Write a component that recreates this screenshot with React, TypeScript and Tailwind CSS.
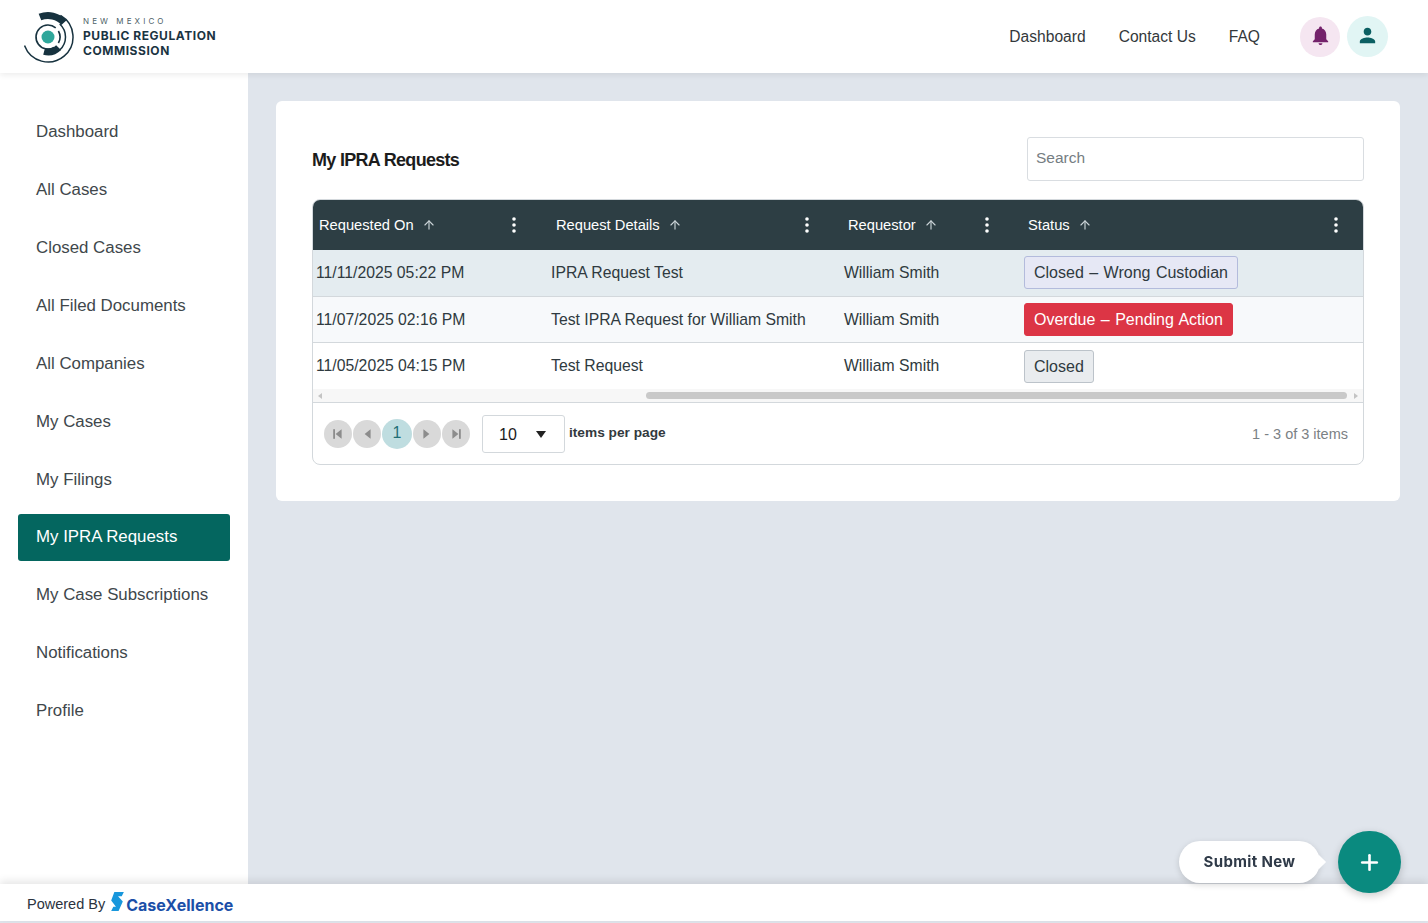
import { ArrowUp, Plus } from "lucide-react";

const navItems = [
  "Dashboard",
  "All Cases",
  "Closed Cases",
  "All Filed Documents",
  "All Companies",
  "My Cases",
  "My Filings",
  "My IPRA Requests",
  "My Case Subscriptions",
  "Notifications",
  "Profile",
];

const rows = [
  {
    date: "11/11/2025 05:22 PM",
    details: "IPRA Request Test",
    status: "Closed – Wrong Custodian",
    badge: "bg-[#e6e8f5] border-[#b3bbdc] text-[#2f3a40] mb-[1px]",
    row: "bg-[#e4ecf0] h-[47px] border-b border-[#d3d8dc]",
  },
  {
    date: "11/07/2025 02:16 PM",
    details: "Test IPRA Request for William Smith",
    status: "Overdue – Pending Action",
    badge: "bg-[#dc3545] border-[#dc3545] text-white",
    row: "bg-[#f7f9fb] h-[46px] border-b border-[#d3d8dc]",
  },
  {
    date: "11/05/2025 04:15 PM",
    details: "Test Request",
    status: "Closed",
    badge: "bg-[#e9ecef] border-[#bcc3ca] text-[#2f3a40] mt-[1px]",
    row: "bg-white h-[46px]",
  },
];

function arc(r: number, from: number, to: number) {
  const rad = (d: number) => (d * Math.PI) / 180;
  const x1 = 24 + r * Math.cos(rad(from));
  const y1 = 27 + r * Math.sin(rad(from));
  const x2 = 24 + r * Math.cos(rad(to));
  const y2 = 27 + r * Math.sin(rad(to));
  const large = to - from > 180 ? 1 : 0;
  return `M${x1} ${y1}A${r} ${r} 0 ${large} 1 ${x2} ${y2}`;
}

function Logo() {
  return (
    <svg width="52" height="54" viewBox="0 0 52 54" fill="none" stroke="#17323f">
      <circle cx="24" cy="27" r="6.5" fill="#2fa79b" stroke="none" />
      <path d={arc(12, 60, 310)} strokeWidth="1.6" />
      <path d={arc(12, -30, 30)} strokeWidth="1.6" />
      <path d={arc(17.5, -48, 48)} strokeWidth="1.5" />
      <path d={arc(25, -60, 160)} strokeWidth="1.5" />
      <path d={arc(21.5, -112, -42)} strokeWidth="7" />
      <path d={arc(15, 45, 105)} strokeWidth="7" />
    </svg>
  );
}

function Dots() {
  return (
    <svg width="4" height="16" viewBox="0 0 4 16" fill="#ffffff">
      <circle cx="2" cy="2" r="1.8" />
      <circle cx="2" cy="8" r="1.8" />
      <circle cx="2" cy="14" r="1.8" />
    </svg>
  );
}

function HeaderCell({ label, pad }: { label: string; pad: string }) {
  return (
    <div className={`flex items-center justify-between ${pad}`}>
      <div className="flex items-center gap-[8px]">
        <span>{label}</span>
        <ArrowUp className="w-[14px] h-[14px] text-[#c9d2d6]" strokeWidth={2} />
      </div>
      <Dots />
    </div>
  );
}

function PagerButton({ children }: { children: React.ReactNode }) {
  return (
    <div className="w-[28px] h-[28px] rounded-full bg-[#d9d9d9] flex items-center justify-center">
      {children}
    </div>
  );
}

function Triangle({ dir, bar }: { dir: "left" | "right"; bar?: boolean }) {
  return (
    <svg width="12" height="12" viewBox="0 0 10 10" fill="#8c8c8c">
      {dir === "left" ? <path d="M8 1v8L3 5z" /> : <path d="M2 1v8l5-4z" />}
      {bar && dir === "left" && <rect x="1" y="1" width="1.5" height="8" />}
      {bar && dir === "right" && <rect x="7.5" y="1" width="1.5" height="8" />}
    </svg>
  );
}

export default function App() {
  return (
    <div className="relative w-[1428px] h-[923px] overflow-hidden flex flex-col bg-[#e0e5ec] font-['Liberation_Sans',Arial,sans-serif] text-[15.75px] text-[#2f3a40]">
      <header className="relative z-20 h-[73px] shrink-0 bg-white shadow-[0_2px_6px_rgba(0,0,0,0.08)] flex items-center pl-[24px] pr-[40px]">
        <Logo />
        <div className="ml-[7px] mb-[1px] font-['Inter',sans-serif] text-[#1b3442] leading-[15px]">
          <div className="text-[8px] tracking-[3.1px] text-[#4d5f68] font-normal leading-[14px]">NEW MEXICO</div>
          <div className="text-[12px] font-bold tracking-[0.55px]">PUBLIC REGULATION</div>
          <div className="text-[12px] font-bold tracking-[0.55px]">COMMISSION</div>
        </div>
        <nav className="ml-auto flex items-center gap-[33px] text-[#33383b] text-[15.6px]">
          <span>Dashboard</span>
          <span>Contact Us</span>
          <span>FAQ</span>
        </nav>
        <div className="ml-[40px] flex items-center gap-[7px]">
          <div className="w-[40px] h-[40px] rounded-full bg-[#f5e6f1] flex items-center justify-center pb-[3px]">
            <svg width="23" height="23" viewBox="0 0 24 24" fill="#74226b">
              <path d="M12 22c1.1 0 2-.9 2-2h-4c0 1.1.9 2 2 2zm6-6v-5c0-3.07-1.63-5.64-4.5-6.32V4c0-.83-.67-1.5-1.5-1.5s-1.5.67-1.5 1.5v.68C7.64 5.36 6 7.92 6 11v5l-2 2v1h16v-1l-2-2z" />
            </svg>
          </div>
          <div className="w-[41px] h-[41px] rounded-full bg-[#e1f5f4] flex items-center justify-center pb-[3px]">
            <svg width="23" height="23" viewBox="0 0 24 24" fill="#0b5f62">
              <path d="M12 12c2.21 0 4-1.79 4-4s-1.79-4-4-4-4 1.79-4 4 1.79 4 4 4zm0 2c-2.67 0-8 1.34-8 4v2h16v-2c0-2.66-5.33-4-8-4z" />
            </svg>
          </div>
        </div>
      </header>

      <div className="flex-1 flex min-h-0">
        <aside className="w-[248px] shrink-0 bg-white pt-[35.4px] px-[18px] flex flex-col gap-[10.9px] text-[16.85px] text-[#40474b]">
          {navItems.map((item) => (
            <div
              key={item}
              className={`h-[47px] shrink-0 rounded-[3px] px-[18px] flex items-center ${
                item === "My IPRA Requests" ? "bg-[#04665f] text-white" : ""
              }`}
            >
              {item}
            </div>
          ))}
        </aside>

        <main className="flex-1 pt-[28px] px-[28px]">
          <div className="bg-white rounded-[6px] p-[36px] h-[400px]">
            <div className="flex items-center justify-between h-[44px]">
              <h1 className="text-[18px] font-bold text-[#1c1c1c] tracking-[-0.7px] mt-[2px]">My IPRA Requests</h1>
              <div className="w-[337px] h-[44px] border border-[#d9dde1] rounded-[3px] pl-[8px] pb-[2px] flex items-center text-[15.5px] text-[#757d82]">
                Search
              </div>
            </div>

            <div className="mt-[18px] border border-[#d3d8dc] rounded-[8px] overflow-hidden">
              <div className="h-[50px] bg-[#2d3e44] text-white grid grid-cols-[235px_293px_180px_1fr] items-center text-[14.7px]">
                <HeaderCell label="Requested On" pad="pl-[6px] pr-[32px]" />
                <HeaderCell label="Request Details" pad="pl-[8px] pr-[32px]" />
                <HeaderCell label="Requestor" pad="pl-[7px] pr-[32px]" />
                <HeaderCell label="Status" pad="pl-[7px] pr-[25px]" />
              </div>

              {rows.map((r) => (
                <div key={r.date} className={`grid grid-cols-[235px_293px_180px_1fr] items-center ${r.row}`}>
                  <div className="pl-[3px]">{r.date}</div>
                  <div className="pl-[3px]">{r.details}</div>
                  <div className="pl-[3px]">William Smith</div>
                  <div className="pl-[3px] flex">
                    <span className={`inline-flex items-center h-[33px] px-[9px] border rounded-[3px] text-[16px] [word-spacing:1px] ${r.badge}`}>
                      {r.status}
                    </span>
                  </div>
                </div>
              ))}

              <div className="h-[14px] bg-[#f7f7f7] border-b border-[#d3d8dc] flex items-center justify-between px-[4px]">
                <svg width="6" height="8" viewBox="0 0 6 8" fill="#c4c4c4"><path d="M5 1v6L1 4z" /></svg>
                <div className="ml-[323px] mr-[6px] flex-1 h-[7px] rounded-full bg-[#c9c9c9]" />
                <svg width="6" height="8" viewBox="0 0 6 8" fill="#c4c4c4"><path d="M1 1v6l4-3z" /></svg>
              </div>

              <div className="h-[61px] flex items-center pl-[11px] pr-[15px]">
                <div className="flex items-center gap-[1px]">
                  <PagerButton><Triangle dir="left" bar /></PagerButton>
                  <PagerButton><Triangle dir="left" /></PagerButton>
                  <div className="w-[30px] h-[30px] rounded-full bg-[#bfdde0] text-[#1f6f76] text-[16px] flex items-center justify-center pb-[2px]">1</div>
                  <PagerButton><Triangle dir="right" /></PagerButton>
                  <PagerButton><Triangle dir="right" bar /></PagerButton>
                </div>
                <div className="ml-[12px] w-[83px] h-[38px] border border-[#d3d8dc] rounded-[3px] flex items-center justify-between pl-[16px] pr-[18px] pt-[2px] text-[16px] text-[#1c1c1c]">
                  <span>10</span>
                  <svg width="10" height="7" viewBox="0 0 10 7" fill="#222222"><path d="M0 0h10L5 7z" /></svg>
                </div>
                <span className="ml-[4px] mb-[1px] text-[13.7px] font-bold text-[#333a3e]">items per page</span>
                <span className="ml-auto pt-[2px] text-[14.5px] text-[#7b8185]">1 - 3 of 3 items</span>
              </div>
            </div>
          </div>
        </main>
      </div>

      <footer className="relative z-10 h-[37px] mb-[2px] shrink-0 bg-white shadow-[0_-3px_8px_rgba(0,0,0,0.10)] flex items-center pl-[27px] pt-[5px] text-[14.5px]">
        <span className="text-[#2b3340]">Powered By</span>
        <svg className="ml-[5px] mb-[7px]" width="14" height="19" viewBox="0 0 13 18" fill="#1897dc">
          <path d="M4 0H13L11 4H7.5L12 9 8 18H1L3 14H5.5L1 8Z" />
        </svg>
        <span className="ml-[2px] font-['Inter',sans-serif] font-bold text-[16px] text-[#1b4fa8]">CaseXellence</span>
      </footer>

      <div className="fixed z-30 left-[1179px] top-[831px] w-[222px] h-[62px] flex items-center justify-between">
        <div className="relative w-[141px] h-[42px] rounded-full bg-white shadow-[0_2px_6px_rgba(0,0,0,0.15)] flex items-center justify-center font-['Inter',sans-serif] font-bold text-[15px] tracking-[0.35px] text-[#2f3a48]">
          Submit New
          <div className="absolute right-[-4px] top-[16px] w-[10px] h-[10px] bg-white rotate-45" />
        </div>
        <div className="w-[63px] h-[62px] rounded-full bg-[#0a8a7f] shadow-[0_3px_8px_rgba(0,0,0,0.2)] flex items-center justify-center">
          <Plus className="w-[25px] h-[25px] text-white" strokeWidth={2.5} />
        </div>
      </div>
    </div>
  );
}
